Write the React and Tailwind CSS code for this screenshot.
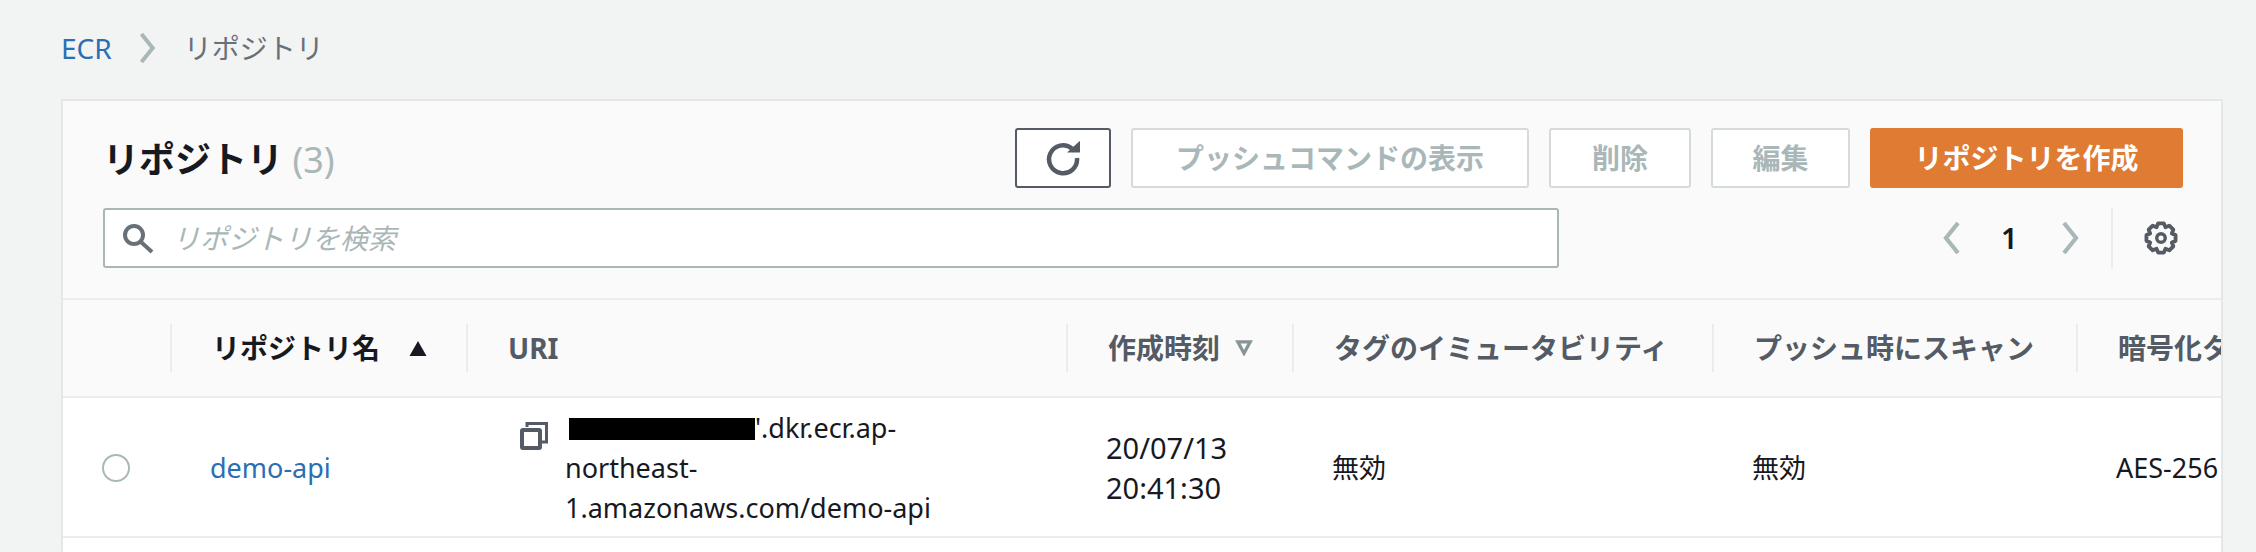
import React from "react";

const CELL_FONT = "font-['Noto_Sans','Noto_Sans_CJK_JP',sans-serif]";

// 8 tooth gear outline, centre 16,16
const gearPoints = () => {
  const pts = [];
  for (let i = 0; i < 8; i++) {
    const a = (i * Math.PI) / 4 - Math.PI / 2;
    const step = Math.PI / 16;
    [[-2, 11], [-1, 14], [1, 14], [2, 11]].forEach(([k, r]) => {
      pts.push(`${(16 + r * Math.cos(a + k * step)).toFixed(1)},${(16 + r * Math.sin(a + k * step)).toFixed(1)}`);
    });
  }
  return pts.join(" ");
};

const Chevron = ({ left, className }) => (
  <svg viewBox="0 0 20 32" className={`flex-none ${className}`} fill="none" stroke="currentColor" strokeWidth="4.2">
    <path d={left ? "M17 1 L5 16 L17 31" : "M3 1 L15 16 L3 31"} />
  </svg>
);

const RefreshIcon = () => (
  <svg viewBox="0 0 36 36" className="h-9 w-9 text-[#545b64]" fill="none" stroke="currentColor" strokeWidth="4.5">
    <path d="M27 8.5 A14 14 0 1 0 32 18" />
    <polygon points="22,12.5 35,0.7 35,12.5" fill="currentColor" stroke="none" />
  </svg>
);

const SearchIcon = () => (
  <svg viewBox="0 0 32 32" className="h-8 w-8 flex-none text-[#687078]" fill="none" stroke="currentColor" strokeWidth="4">
    <circle cx="12" cy="13" r="9" />
    <path d="M19 20 L30 30" />
  </svg>
);

const GearIcon = () => (
  <svg viewBox="0 0 32 32" className="ml-[31px] h-[34px] w-[34px] flex-none text-[#545b64]" fill="none" stroke="currentColor" strokeWidth="3.6">
    <polygon points={gearPoints()} strokeLinejoin="round" />
    <circle cx="16" cy="16" r="4" strokeWidth="3.2" />
  </svg>
);

const CopyIcon = () => (
  <svg viewBox="0 0 28 28" className="h-7 w-7 text-[#545b64]" fill="none" stroke="currentColor">
    <path d="M7 5 V1.5 H26.5 V20 H22" strokeWidth="3" />
    <rect x="2" y="8" width="18" height="18" rx="1" strokeWidth="4" />
  </svg>
);

const Button = ({ children, className }) => (
  <button className={`flex h-[60px] items-center justify-center rounded-[3px] border-2 text-[28px] font-bold ${className}`}>
    {children}
  </button>
);

const HeadCell = ({ children, className = "" }) => (
  <div className={`flex h-12 items-center whitespace-nowrap border-l-2 border-[#eaeded] text-[28px] font-bold ${className}`}>
    {children}
  </div>
);

export default function App() {
  return (
    <div className={`h-[552px] w-[2256px] overflow-hidden bg-[#f2f3f3] pl-[61px] pr-[33px] ${CELL_FONT}`}>
      <div className="flex h-[99px] items-center pb-[3px] text-[28px]">
        <a className="text-[#2a6fb3]">ECR</a>
        <Chevron className="ml-[26px] mr-[26px] h-[30px] w-[20px] text-[#aab7b8]" />
        <span className="text-[#687078]">リポジトリ</span>
      </div>

      <div className="h-[453px] overflow-hidden border-l-2 border-r-2 border-t-2 border-[#e4e7e7] bg-[#fafafa]">
        {/* header */}
        <div className="h-[199px] border-b-2 border-[#eaeded] pl-[40px] pr-[38px] pt-[27px]">
          <div className="flex h-[60px] items-center">
            <h1 className="pt-[4px] text-[36px] font-bold text-[#16191f]">
              リポジトリ <span className="font-normal text-[#aab7b8]">(3)</span>
            </h1>
            <div className="ml-auto flex gap-[20px]">
              <Button className="w-[96px] border-[#545b64] bg-white"><RefreshIcon /></Button>
              <Button className="w-[398px] border-[#d5dbdb] bg-white text-[#aab7b8]">プッシュコマンドの表示</Button>
              <Button className="w-[142px] border-[#d5dbdb] bg-white text-[#aab7b8]">削除</Button>
              <Button className="w-[139px] border-[#d5dbdb] bg-white text-[#aab7b8]">編集</Button>
              <Button className="w-[313px] border-[#e07b33] bg-[#e07b33] text-white">リポジトリを作成</Button>
            </div>
          </div>
          <div className="mt-[20px] flex h-[60px] items-center">
            <div className="flex h-[60px] w-[1456px] flex-none items-center rounded-[3px] border-2 border-[#aab7b8] bg-white pl-[17px]">
              <SearchIcon />
              <span className="ml-[18px] text-[28px] italic text-[#aab7b8]">リポジトリを検索</span>
            </div>
            <Chevron left className="ml-[382px] h-[32px] w-[20px] text-[#aab7b8]" />
            <span className="ml-[40px] w-[17px] flex-none text-[29px] font-semibold text-[#16191f]">1</span>
            <Chevron className="ml-[43px] h-[32px] w-[20px] text-[#aab7b8]" />
            <div className="ml-[30px] h-[60px] flex-none border-l-2 border-[#eaeded]" />
            <GearIcon />
          </div>
        </div>

        {/* table */}
        <div className="w-[2400px]">
          <div className="grid h-[98px] grid-cols-[107px_296px_600px_226px_420px_364px_300px] items-center border-b-2 border-[#eaeded] text-[#545b64]">
            <div />
            <HeadCell className="pl-[40px] text-[#16191f]">
              リポジトリ名
              <svg viewBox="0 0 20 18" className="ml-[26px] h-[17px] w-[24px] text-[#16191f]" fill="currentColor">
                <path d="M10 1 L19 17 H1 Z" />
              </svg>
            </HeadCell>
            <HeadCell className="pl-[40px]">URI</HeadCell>
            <HeadCell className="pl-[40px]">
              作成時刻
              <svg viewBox="0 0 20 18" className="ml-[14px] h-[16px] w-[20px] text-[#879596]" fill="none" stroke="currentColor" strokeWidth="3.6">
                <path d="M3 2 H17 L10 15 Z" />
              </svg>
            </HeadCell>
            <HeadCell className="pl-[40px]">タグのイミュータビリティ</HeadCell>
            <HeadCell className="pl-[40px]">プッシュ時にスキャン</HeadCell>
            <HeadCell className="pl-[40px]">暗号化タイプ</HeadCell>
          </div>

          <div className="grid h-[140px] grid-cols-[107px_296px_600px_226px_420px_364px_300px] items-center border-b-2 border-[#eaeded] bg-white pt-[2px] text-[27px] leading-[40px] text-[#16191f]">
            <div className="pl-[39px]">
              <div className="h-[28px] w-[28px] rounded-full border-2 border-[#aab7b8] bg-white" />
            </div>
            <a className="pl-[40px] text-[#2a6fb3]">demo-api</a>
            <div className="flex pl-[54px]">
              <div className="pt-[14px]"><CopyIcon /></div>
              <div className="ml-[17px] w-[420px]">
                <span className="ml-[4px] inline-block h-[22px] w-[186px] translate-y-[2px] bg-black" />
                '.dkr.ecr.ap-
                <br />
                northeast-
                <br />
                1.amazonaws.com/demo-api
              </div>
            </div>
            <div className="pl-[40px] text-[29px]">
              20/07/13
              <br />
              20:41:30
            </div>
            <div className="pl-[40px]">無効</div>
            <div className="pl-[40px]">無効</div>
            <div className="pl-[40px]">AES-256</div>
          </div>
          <div className="h-[20px] bg-white" />
        </div>
      </div>
    </div>
  );
}
